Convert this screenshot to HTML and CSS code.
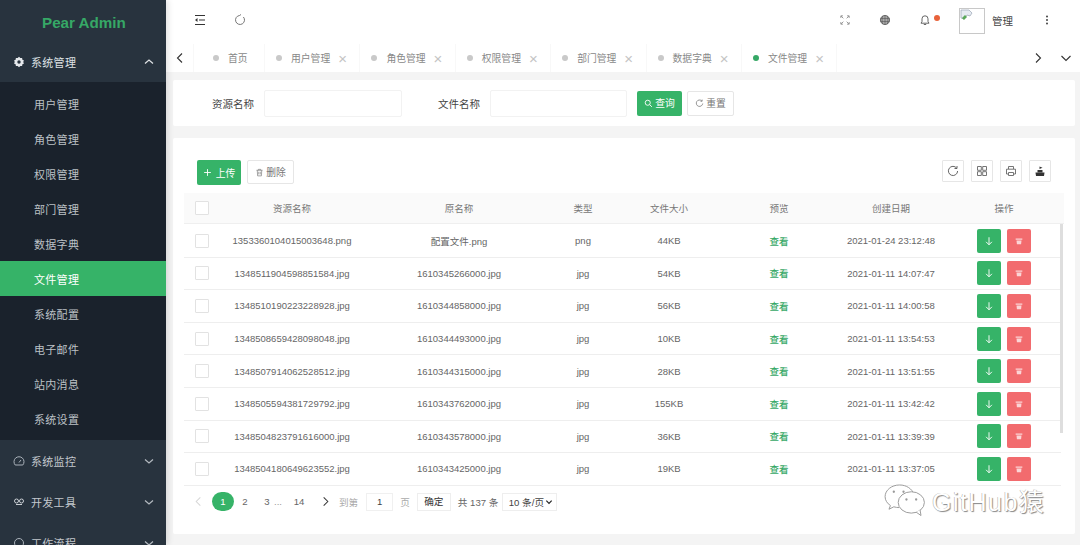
FILE: index.html
```html
<!DOCTYPE html>
<html lang="zh-CN">
<head>
<meta charset="utf-8">
<title>Pear Admin</title>
<link rel="stylesheet" href="styles.css">
</head>
<body>
<svg class="defs" width="0" height="0">
  <symbol id="i-down" viewBox="0 0 12 12"><path d="M6 1.500v9M2.500 7L6 10.500 9.500 7" fill="none" stroke="currentColor" stroke-width="1.100"/></symbol>
  <symbol id="i-trash" viewBox="0 0 12 12"><path d="M2 3h8v1.500H2zM3 5.500h6L8.500 10h-5z" fill="currentColor"/></symbol>
  <symbol id="i-trash-line" viewBox="0 0 12 12"><path d="M2 3h8M4.500 3V1.800h3V3M3 3l.5 7.500h5L9 3M5 5v3.500M7 5v3.500" fill="none" stroke="currentColor" stroke-width=".9"/></symbol>
  <symbol id="i-chev" viewBox="0 0 12 12"><path d="M2 4.500L6 8l4-3.500" fill="none" stroke="currentColor" stroke-width="1.200"/></symbol>
</svg>

<aside class="sidebar">
  <div class="logo">Pear Admin</div>
  <div class="menu-item">
    <svg class="menu-icon" viewBox="0 0 12 12"><path d="M6 .8l1.300 1.300 1.800-.2.300 1.800 1.600.9-.8 1.400.8 1.400-1.600.9-.3 1.800-1.800-.2L6 11.200 4.700 9.900l-1.800.2-.3-1.800L1 7.400l.8-1.400L1 4.600l1.600-.9.3-1.800 1.800.2z" fill="#e6e9ec"/><circle cx="6" cy="6" r="1.700" fill="#28333e"/></svg>
    <span class="menu-label menu-label-on">系统管理</span>
    <svg class="chev chev-up" viewBox="0 0 12 12"><use href="#i-chev"/></svg>
  </div>
  <nav class="submenu">
    <a class="sub-item">用户管理</a>
    <a class="sub-item">角色管理</a>
    <a class="sub-item">权限管理</a>
    <a class="sub-item">部门管理</a>
    <a class="sub-item">数据字典</a>
    <a class="sub-item sub-active">文件管理</a>
    <a class="sub-item">系统配置</a>
    <a class="sub-item">电子邮件</a>
    <a class="sub-item">站内消息</a>
    <a class="sub-item">系统设置</a>
  </nav>
  <div class="menu-item">
    <svg class="menu-icon" viewBox="0 0 12 12"><path d="M2.200 10A5 5 0 1 1 9.800 10z" fill="none" stroke="#aab2ba" stroke-width="1"/><path d="M6 7.500L8 5" stroke="#aab2ba"/></svg>
    <span class="menu-label">系统监控</span>
    <svg class="chev" viewBox="0 0 12 12"><use href="#i-chev"/></svg>
  </div>
  <div class="menu-item">
    <svg class="menu-icon" viewBox="0 0 12 12"><circle cx="3.500" cy="5" r="2" fill="none" stroke="#c9ced3"/><circle cx="8.500" cy="5" r="2" fill="none" stroke="#c9ced3"/><path d="M3 8.500h6" stroke="#c9ced3"/></svg>
    <span class="menu-label">开发工具</span>
    <svg class="chev" viewBox="0 0 12 12"><use href="#i-chev"/></svg>
  </div>
  <div class="menu-item">
    <svg class="menu-icon" viewBox="0 0 12 12"><circle cx="6" cy="6" r="4.500" fill="none" stroke="#aab2ba"/></svg>
    <span class="menu-label">工作流程</span>
    <svg class="chev" viewBox="0 0 12 12"><use href="#i-chev"/></svg>
  </div>
</aside>

<main class="main">
  <header class="topbar">
    <svg class="ico ico-collapse" viewBox="0 0 12 12"><path d="M1 1.500h10M5 6h6M1 10.500h10" stroke="#333" stroke-width="1.100" fill="none"/><path d="M3.500 4L1 6l2.500 2z" fill="#333"/></svg>
    <svg class="ico ico-reload" viewBox="0 0 12 12"><path d="M9.400 3A4.500 4.500 0 1 1 5.500 1.500" fill="none" stroke="#666" stroke-width=".9"/><path d="M5.500 1.500L7 .5" stroke="#666" stroke-width=".9"/></svg>
    <div class="top-right">
      <svg class="ico ico-full" viewBox="0 0 12 12"><path d="M1 3.500V1h2.500M8.500 1H11v2.500M11 8.500V11H8.500M3.500 11H1V8.500M1.500 1.500L4 4M10.500 1.500L8 4M10.500 10.500L8 8M1.500 10.500L4 8" fill="none" stroke="#777" stroke-width=".9"/></svg>
      <svg class="ico ico-globe" viewBox="0 0 12 12"><circle cx="6" cy="6" r="4.600" fill="#aaa" stroke="#555" stroke-width=".8"/><path d="M1.500 4.500h9M1.500 7.500h9M6 1.400v9.200M3.800 2c-1 2.500-1 5.500 0 8M8.200 2c1 2.500 1 5.500 0 8" stroke="#555" stroke-width=".6" fill="none"/></svg>
      <span class="bell">
        <svg class="ico" viewBox="0 0 12 12"><path d="M2 9.200h8L9 7.500V4.800a3 3 0 0 0-6 0v2.700zM4.800 10.500h2.400" fill="none" stroke="#555" stroke-width=".9"/></svg>
        <i class="bell-dot"></i>
      </span>
      <span class="avatar">
        <svg class="broken" viewBox="0 0 14 14"><path d="M1 1h8l3 3-2 3-3-1-3 4-3-1z" fill="#e6ebf2" stroke="#9aa5b5" stroke-width=".7"/><path d="M2 9l3-3 2 2-3 3z" fill="#5aa85a"/></svg>
      </span>
      <span class="user">管理</span>
      <svg class="ico ico-more" viewBox="0 0 12 12"><circle cx="6" cy="2.500" r="1" fill="#444"/><circle cx="6" cy="6" r="1" fill="#444"/><circle cx="6" cy="9.500" r="1" fill="#444"/></svg>
    </div>
  </header>

  <div class="tabs">
    <button class="tab-nav tab-prev"><svg viewBox="0 0 12 12"><path d="M8 1.500L3.500 6 8 10.500" fill="none" stroke="#333" stroke-width="1.100"/></svg></button>
    <div class="tab tab-home"><i class="dot"></i><span>首页</span></div>
    <div class="tab"><i class="dot"></i><span>用户管理</span><b class="close">×</b></div>
    <div class="tab"><i class="dot"></i><span>角色管理</span><b class="close">×</b></div>
    <div class="tab"><i class="dot"></i><span>权限管理</span><b class="close">×</b></div>
    <div class="tab"><i class="dot"></i><span>部门管理</span><b class="close">×</b></div>
    <div class="tab"><i class="dot"></i><span>数据字典</span><b class="close">×</b></div>
    <div class="tab"><i class="dot dot-on"></i><span>文件管理</span><b class="close">×</b></div>
    <div class="tab-space"></div>
    <button class="tab-nav"><svg viewBox="0 0 12 12"><path d="M4 1.500L8.500 6 4 10.500" fill="none" stroke="#333" stroke-width="1.100"/></svg></button>
    <button class="tab-nav"><svg viewBox="0 0 12 12"><path d="M1.500 4L6 8.500 10.500 4" fill="none" stroke="#333" stroke-width="1.100"/></svg></button>
  </div>

  <section class="search card">
    <label class="field-label">资源名称</label>
    <div class="field-input"></div>
    <label class="field-label field-label-2">文件名称</label>
    <div class="field-input field-input-2"></div>
    <button class="btn btn-green btn-query">
      <svg viewBox="0 0 12 12"><circle cx="5" cy="5" r="3.400" fill="none" stroke="#fff" stroke-width="1.200"/><path d="M7.500 7.500L10.500 10.500" stroke="#fff" stroke-width="1.200"/></svg>查询
    </button>
    <button class="btn btn-plain btn-reset">
      <svg viewBox="0 0 12 12"><path d="M9 2.500A4.300 4.300 0 1 0 10.300 6" fill="none" stroke="#666" stroke-width=".9"/><path d="M9.500 .8V3H7.300" fill="none" stroke="#666" stroke-width=".9"/></svg>重置
    </button>
  </section>

  <section class="panel card">
    <div class="toolbar">
      <button class="btn btn-green btn-upload"><svg viewBox="0 0 12 12"><path d="M6 1.500v9M1.500 6h9" stroke="#fff" stroke-width="1.200"/></svg>上传</button>
      <button class="btn btn-plain btn-delete"><svg viewBox="0 0 12 12"><use href="#i-trash-line"/></svg>删除</button>
      <div class="tools">
        <button class="tool"><svg viewBox="0 0 12 12"><path d="M9.700 3.200A4.600 4.600 0 1 0 10.600 6" fill="none" stroke="#555" stroke-width=".9"/><path d="M10 1v2.500H7.500" fill="none" stroke="#555" stroke-width=".9"/></svg></button>
        <button class="tool"><svg viewBox="0 0 12 12"><path d="M1.500 1.500h3.800v3.800H1.500zM6.700 1.500h3.800v3.800H6.700zM1.500 6.700h3.800v3.800H1.500zM6.700 6.700h3.800v3.800H6.700z" fill="none" stroke="#666" stroke-width=".9"/></svg></button>
        <button class="tool"><svg viewBox="0 0 12 12"><path d="M3.500 4V1.500h5V4M3 9H1.500V4.200h9V9H9M3.500 7.500h5v3h-5z" fill="none" stroke="#666" stroke-width=".9"/></svg></button>
        <button class="tool"><svg viewBox="0 0 12 12"><path d="M1.500 7.500h9L10 11H2z" fill="#333"/><path d="M3.500 5h5v2.500h-5z" fill="#333"/><path d="M5.500 1.500l3 1.200-3 1.200z" fill="#333"/></svg></button>
      </div>
    </div>

    <div class="table">
      <div class="row row-head">
        <span class="cell-check"><i class="check"></i></span>
        <span>资源名称</span><span>原名称</span><span>类型</span><span>文件大小</span><span>预览</span><span>创建日期</span><span>操作</span>
      </div>
      <div class="tbody">
        <div class="row">
          <span class="cell-check"><i class="check"></i></span><span>1353360104015003648.png</span><span>配置文件.png</span><span>png</span><span>44KB</span><a class="view">查看</a><span>2021-01-24 23:12:48</span>
          <span class="ops"><button class="op op-green"><svg viewBox="0 0 12 12"><use href="#i-down"/></svg></button><button class="op op-red"><svg viewBox="0 0 12 12"><use href="#i-trash"/></svg></button></span>
        </div>
        <div class="row">
          <span class="cell-check"><i class="check"></i></span><span>1348511904598851584.jpg</span><span>1610345266000.jpg</span><span>jpg</span><span>54KB</span><a class="view">查看</a><span>2021-01-11 14:07:47</span>
          <span class="ops"><button class="op op-green"><svg viewBox="0 0 12 12"><use href="#i-down"/></svg></button><button class="op op-red"><svg viewBox="0 0 12 12"><use href="#i-trash"/></svg></button></span>
        </div>
        <div class="row">
          <span class="cell-check"><i class="check"></i></span><span>1348510190223228928.jpg</span><span>1610344858000.jpg</span><span>jpg</span><span>56KB</span><a class="view">查看</a><span>2021-01-11 14:00:58</span>
          <span class="ops"><button class="op op-green"><svg viewBox="0 0 12 12"><use href="#i-down"/></svg></button><button class="op op-red"><svg viewBox="0 0 12 12"><use href="#i-trash"/></svg></button></span>
        </div>
        <div class="row">
          <span class="cell-check"><i class="check"></i></span><span>1348508659428098048.jpg</span><span>1610344493000.jpg</span><span>jpg</span><span>10KB</span><a class="view">查看</a><span>2021-01-11 13:54:53</span>
          <span class="ops"><button class="op op-green"><svg viewBox="0 0 12 12"><use href="#i-down"/></svg></button><button class="op op-red"><svg viewBox="0 0 12 12"><use href="#i-trash"/></svg></button></span>
        </div>
        <div class="row">
          <span class="cell-check"><i class="check"></i></span><span>1348507914062528512.jpg</span><span>1610344315000.jpg</span><span>jpg</span><span>28KB</span><a class="view">查看</a><span>2021-01-11 13:51:55</span>
          <span class="ops"><button class="op op-green"><svg viewBox="0 0 12 12"><use href="#i-down"/></svg></button><button class="op op-red"><svg viewBox="0 0 12 12"><use href="#i-trash"/></svg></button></span>
        </div>
        <div class="row">
          <span class="cell-check"><i class="check"></i></span><span>1348505594381729792.jpg</span><span>1610343762000.jpg</span><span>jpg</span><span>155KB</span><a class="view">查看</a><span>2021-01-11 13:42:42</span>
          <span class="ops"><button class="op op-green"><svg viewBox="0 0 12 12"><use href="#i-down"/></svg></button><button class="op op-red"><svg viewBox="0 0 12 12"><use href="#i-trash"/></svg></button></span>
        </div>
        <div class="row">
          <span class="cell-check"><i class="check"></i></span><span>1348504823791616000.jpg</span><span>1610343578000.jpg</span><span>jpg</span><span>36KB</span><a class="view">查看</a><span>2021-01-11 13:39:39</span>
          <span class="ops"><button class="op op-green"><svg viewBox="0 0 12 12"><use href="#i-down"/></svg></button><button class="op op-red"><svg viewBox="0 0 12 12"><use href="#i-trash"/></svg></button></span>
        </div>
        <div class="row">
          <span class="cell-check"><i class="check"></i></span><span>1348504180649623552.jpg</span><span>1610343425000.jpg</span><span>jpg</span><span>19KB</span><a class="view">查看</a><span>2021-01-11 13:37:05</span>
          <span class="ops"><button class="op op-green"><svg viewBox="0 0 12 12"><use href="#i-down"/></svg></button><button class="op op-red"><svg viewBox="0 0 12 12"><use href="#i-trash"/></svg></button></span>
        </div>
        <i class="scrollbar"></i>
      </div>
    </div>

    <div class="pager">
      <svg class="pg-arrow pg-prev" viewBox="0 0 12 12"><path d="M8 1.500L3.500 6 8 10.500" fill="none" stroke="#d5d5d5" stroke-width="1.100"/></svg>
      <span class="pg-num pg-on">1</span>
      <span class="pg-num">2</span>
      <span class="pg-num">3</span>
      <span class="pg-ell">...</span>
      <span class="pg-num">14</span>
      <svg class="pg-arrow pg-next" viewBox="0 0 12 12"><path d="M4 1.500L8.500 6 4 10.500" fill="none" stroke="#333" stroke-width="1.100"/></svg>
      <span class="pg-muted">到第</span>
      <span class="pg-input">1</span>
      <span class="pg-muted pg-unit">页</span>
      <span class="pg-ok">确定</span>
      <span class="pg-total">共 137 条</span>
      <span class="pg-select">10 条/页<svg viewBox="0 0 12 12"><path d="M2 4l4 4 4-4" fill="none" stroke="#222" stroke-width="1.800"/></svg></span>
    </div>
  </section>
</main>

<div class="watermark">
  <svg class="wm-icon" viewBox="0 0 44 34">
    <path d="M17 1C8.500 1 2 6.500 2 13c0 3.800 2.200 7 5.500 9.200L6 26l5-2.500c1.800.5 3.500.8 5.500.8" fill="#fff" stroke="#9a9a9a" stroke-width="1"/>
    <path d="M17 1c7 0 13 4 14.500 9.500" fill="#fff" stroke="#9a9a9a" stroke-width="1"/>
    <ellipse cx="29" cy="19" rx="13.500" ry="11" fill="#fff" stroke="#9a9a9a" stroke-width="1"/>
    <path d="M34 29l5 3.500-1-6" fill="#fff" stroke="#9a9a9a" stroke-width="1"/>
    <circle cx="11" cy="8" r="1.200" fill="#999"/><circle cx="21" cy="8" r="1.200" fill="#999"/>
    <circle cx="24" cy="16" r="1.200" fill="#999"/><circle cx="34" cy="16" r="1.200" fill="#999"/>
  </svg>
  <span class="wm-text">GitHub猿</span>
</div>
</body>
</html>
```

FILE: styles.css
```css
* { box-sizing: border-box; }
html, body { margin: 0; height: 545px; overflow: hidden; }
body {
  display: flex;
  background: #f4f4f4;
  font-family: "Liberation Sans", "Noto Sans CJK SC", sans-serif;
  font-size: 9.500px;
  color: #666;
}
.defs { position: absolute; }
button { font: inherit; padding: 0; margin: 0; }

/* Sidebar */
.sidebar {
  width: 166px;
  flex: none;
  height: 545px;
  overflow: hidden;
  background: #28333e;
  box-shadow: 2px 0 6px rgba(0,0,0,.12);
  position: relative;
  z-index: 2;
}
.logo {
  height: 41px;
  padding-top: 14px;
  padding-left: 42px;
  color: #36a866;
  font-weight: 700;
  font-size: 15.200px;
  line-height: 18px;
}
.menu-item {
  display: flex;
  align-items: center;
  height: 41px;
  padding-left: 13px;
  padding-right: 11px;
  color: #c3c8cd;
}
.menu-icon { width: 12px; height: 12px; flex: none; }
.menu-label {
  margin-left: 6px;
  font-size: 11px;
  letter-spacing: .3px;
  flex: 1;
  color: #c3c8cd;
}
.menu-label-on { color: #dfe2e5; }
.chev { width: 12px; height: 12px; color: #b4bac0; flex: none; }
.chev-up { transform: rotate(180deg); color: #dfe2e5; }
.submenu {
  background: #1a222c;
  display: flex;
  flex-direction: column;
  padding: 4px 0 4px;
}
.sub-item {
  height: 35px;
  display: flex;
  align-items: center;
  padding-left: 34px;
  font-size: 11px;
  letter-spacing: .3px;
  color: #bcc1c6;
}
.sub-active { background: #36b368; color: #fff; }

/* Main */
.main { flex: 1; min-width: 0; display: flex; flex-direction: column; }
.topbar {
  height: 44px;
  flex: none;
  background: #fff;
  display: flex;
  align-items: center;
  padding-left: 28px;
  padding-bottom: 4px;
}
.ico { width: 12px; height: 12px; flex: none; display: block; }
.ico-reload { margin-left: 28px; }
.top-right { margin-left: auto; display: flex; align-items: center; }
.ico-full { width: 10px; height: 10px; margin-right: 29px; }
.ico-globe { margin-right: 28px; }
.bell { position: relative; display: block; margin-right: 28px; }
.bell-dot {
  position: absolute;
  top: 1px;
  right: -9px;
  width: 6px;
  height: 6px;
  border-radius: 50%;
  background: #e8623a;
}
.avatar {
  width: 26px;
  height: 26px;
  margin-top: 2px;
  border: 1px solid #c8c8c8;
  background: #fff;
  display: block;
}
.broken { width: 14px; height: 14px; display: block; }
.user { margin-left: 7px; font-size: 10.500px; color: #444; width: 21px; }
.ico-more { margin-left: 28px; margin-right: 27px; }

/* Tabs */
.tabs {
  height: 28px;
  flex: none;
  background: #fff;
  display: flex;
  align-items: center;
  font-size: 9.800px;
  color: #888;
}
.tab-nav {
  width: 28px;
  height: 28px;
  border: 0;
  background: #fff;
  display: flex;
  align-items: center;
  justify-content: center;
  flex: none;
}
.tab-nav svg { width: 12px; height: 12px; display: block; }
.tab-prev { border-right: 1px solid #f8f8f8; }
.tab {
  width: 95.400px;
  height: 28px;
  flex: none;
  display: flex;
  align-items: center;
  padding-left: 11px;
  border-right: 1px solid #f8f8f8;
}
.tab-home { width: 71px; padding-left: 19px; }
.dot {
  width: 6px;
  height: 6px;
  border-radius: 50%;
  background: #c9c9c9;
  flex: none;
  margin-right: 9px;
}
.dot-on { background: #36a866; }
.close {
  font-weight: 400;
  font-size: 15px;
  color: #c4c4c4;
  margin-left: 8px;
  line-height: 1;
}
.tab-space { flex: 1; }

/* Cards */
.card { background: #fff; }
.search {
  margin: 8px 5px 0 7px;
  height: 46px;
  flex: none;
  display: flex;
  align-items: center;
  padding-left: 39px;
  border-radius: 2px;
}
.field-label { font-size: 10.500px; color: #444; width: 52px; }
.field-input {
  width: 138px;
  height: 27px;
  border: 1px solid #f2f2f2;
  border-radius: 2px;
}
.field-label-2 { margin-left: 36px; }
.field-input-2 { width: 137px; }
.btn {
  display: flex;
  align-items: center;
  justify-content: center;
  border-radius: 2px;
  font-size: 9.800px;
}
.btn svg { width: 9px; height: 9px; margin-right: 2px; }
.btn-green { background: #36b368; color: #fff; border: 0; }
.btn-plain { background: #fff; color: #777; border: 1px solid #e6e6e6; }
.btn-query { margin-left: 10px; width: 45px; height: 25px; }
.btn-reset { margin-left: 5px; width: 47px; height: 25px; }
.panel {
  margin: 12px 5px 0 7px;
  height: 396px;
  flex: none;
  padding: 22px 11px 0 11px;
  border-radius: 2px;
}
.toolbar { display: flex; align-items: flex-start; height: 25px; padding-left: 13px; }
.btn-upload { width: 44px; height: 25px; }
.btn-upload svg { margin-right: 4px; }
.btn-delete { width: 47px; height: 24px; margin-left: 6px; }
.tools { margin-left: auto; display: flex; gap: 7px; margin-right: 13px; }
.tool {
  width: 22px;
  height: 22px;
  border: 1px solid #e6e6e6;
  background: #fff;
  display: flex;
  align-items: center;
  justify-content: center;
  border-radius: 1px;
}
.tool svg { width: 12px; height: 12px; display: block; }

/* Table */
.table { margin-top: 8px; width: 880px; }
.tbody { position: relative; padding-top: 1px; }
.row {
  display: grid;
  grid-template-columns: 36px 144px 190px 58px 114px 106px 118px 108px;
  align-items: center;
  justify-items: center;
  height: 32.600px;
  border-bottom: 1px solid #eee;
  width: 877px;
  text-align: center;
  white-space: nowrap;
}
.row-head {
  height: 31px;
  width: 880px;
  background: #fafafa;
  color: #777;
  border-bottom: 1px solid #efefef;
}
.check {
  display: block;
  width: 14px;
  height: 14px;
  border: 1px solid #e2e2e2;
  background: #fff;
  border-radius: 1px;
}
.view { color: #36a866; font-weight: 500; }
.ops { display: flex; gap: 6px; }
.op {
  width: 24px;
  height: 24px;
  border: 0;
  border-radius: 2px;
  color: #fff;
  display: flex;
  align-items: center;
  justify-content: center;
}
.op svg { width: 10px; height: 10px; display: block; }
.op-green { background: #36b368; }
.op-red { background: #f26b6e; color: #fbd5d6; }
.scrollbar {
  position: absolute;
  left: 876px;
  top: 0;
  width: 3px;
  height: 209px;
  background: #dedede;
}

/* Pager */
.pager {
  display: flex;
  align-items: center;
  height: 18px;
  margin-top: 7px;
  padding-left: 9px;
  font-size: 9.600px;
  color: #666;
}
.pg-arrow { width: 11px; height: 11px; flex: none; display: block; }
.pg-num { width: 22px; text-align: center; }
.pg-on {
  margin-left: 8px;
  height: 19px;
  line-height: 19px;
  border-radius: 10px;
  background: #36b368;
  color: #fff;
}
.pg-ell { width: 6px; text-align: center; color: #999; margin-left: -4px; margin-right: 8px; }
.pg-next { margin-left: 10px; }
.pg-muted { color: #aaa; margin-left: 8px; }
.pg-unit { margin-left: 7px; }
.pg-input {
  width: 27px;
  height: 18px;
  line-height: 16px;
  text-align: center;
  border: 1px solid #f0f0f0;
  margin-left: 8px;
  color: #444;
}
.pg-ok {
  width: 34px;
  height: 18px;
  line-height: 16px;
  text-align: center;
  border: 1px solid #eee;
  margin-left: 7px;
  color: #333;
}
.pg-total { margin-left: 7px; width: 37px; white-space: nowrap; }
.pg-select {
  width: 55px;
  height: 18px;
  margin-left: 7px;
  border: 1px solid #eee;
  display: flex;
  align-items: center;
  justify-content: space-between;
  padding: 0 3px 0 6px;
  color: #444;
  white-space: nowrap;
}
.pg-select svg { width: 8px; height: 8px; }

/* Watermark */
.watermark {
  position: absolute;
  left: 883px;
  top: 482px;
  display: flex;
  align-items: center;
  z-index: 3;
}
.wm-icon { width: 43px; height: 33px; display: block; }
.wm-text {
  margin-left: 6px;
  font-size: 25px;
  letter-spacing: 1.500px;
  color: #fff;
  text-shadow: 1px 1px 1px #888, -.5px 0 .5px #aaa;
  white-space: nowrap;
}
```
